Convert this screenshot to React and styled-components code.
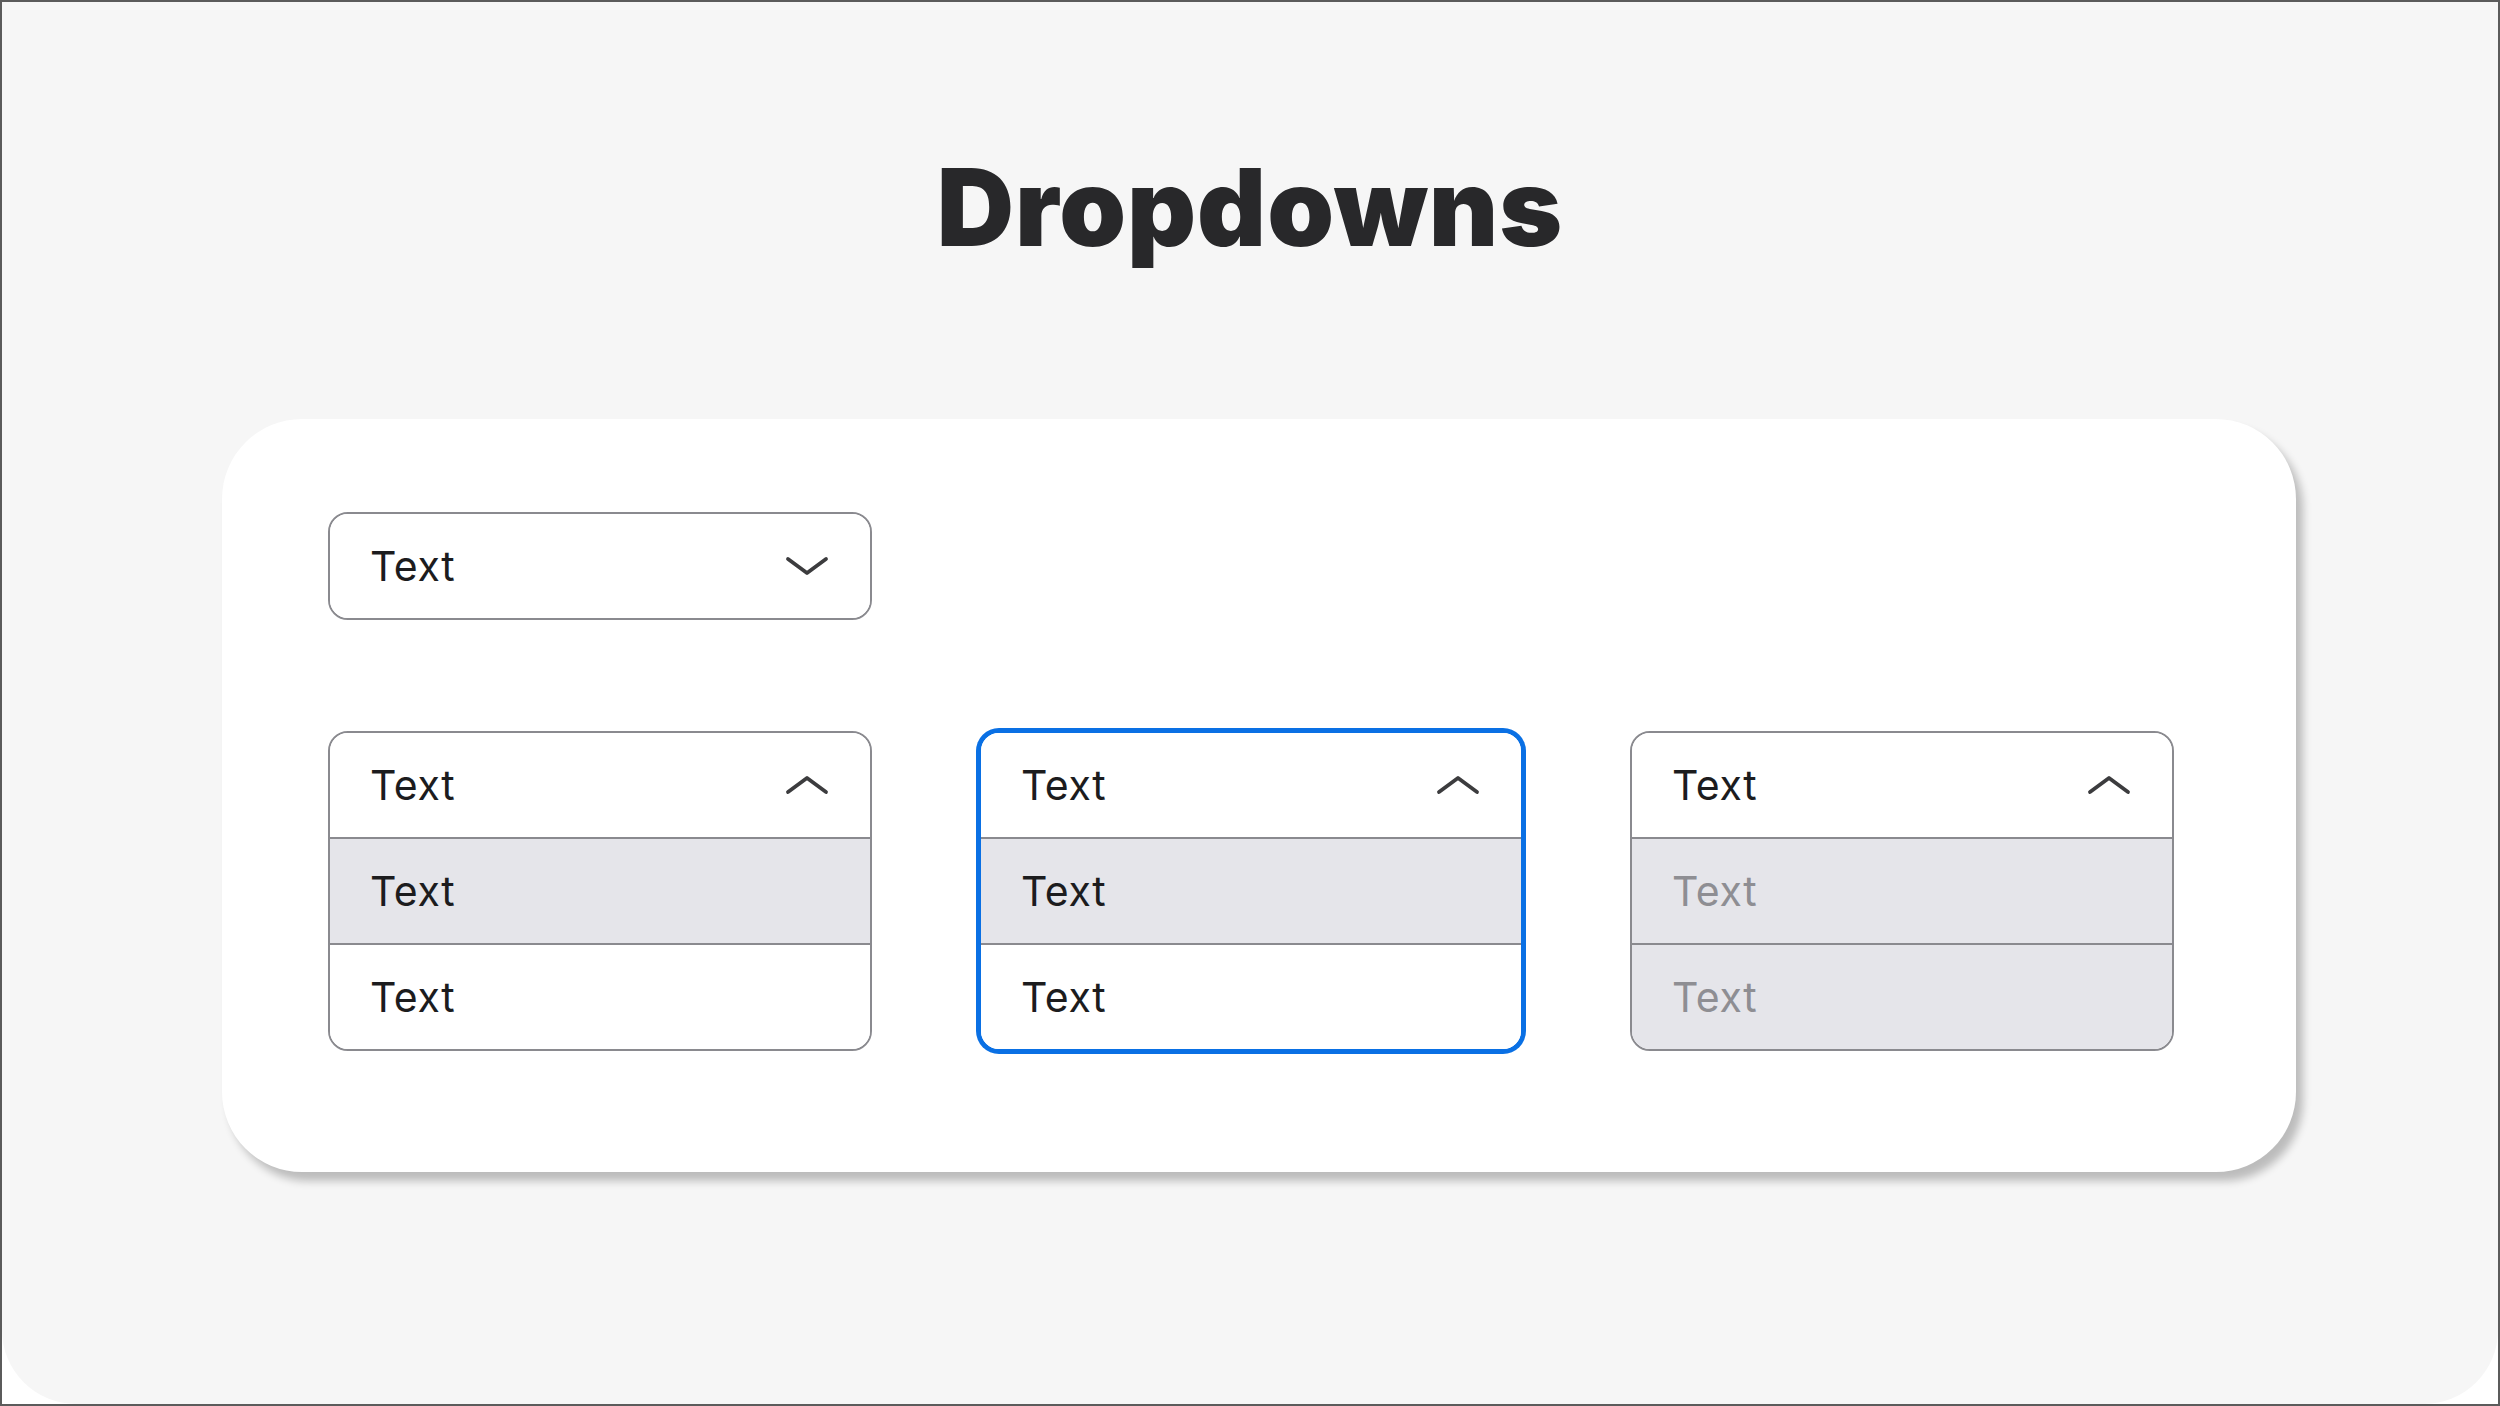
import React from "react";
import styled, { createGlobalStyle, css } from "styled-components";

const Global = createGlobalStyle`
  html, body {
    margin: 0;
    padding: 0;
    background: #ffffff;
  }
  * {
    box-sizing: border-box;
  }
`;

const Frame = styled.div`
  width: 2500px;
  height: 1406px;
  border: 2px solid #5b5b5b;
  background: #ffffff;
  font-family: Inter, "Noto Sans", sans-serif;
`;

const Panel = styled.main`
  height: 100%;
  background: #f6f6f6;
  border-radius: 0 0 74px 74px;
  padding-top: 152px;
  display: flex;
  flex-direction: column;
`;

const Title = styled.h1`
  margin: 0;
  text-align: center;
  font-family: Inter, sans-serif;
  font-weight: 900;
  font-size: 107px;
  line-height: 1;
  letter-spacing: 1px;
  color: #28282a;
`;

const Card = styled.section`
  margin: 158px 0 0 220px;
  width: 2074px;
  background: #ffffff;
  border-radius: 80px;
  box-shadow: 7px 9px 8px rgba(0, 0, 0, 0.24);
  padding: 93px 0 121px 106px;
  display: flex;
  flex-direction: column;
  gap: 111px;
`;

const Columns = styled.div`
  display: grid;
  grid-template-columns: repeat(3, 544px);
  column-gap: 107px;
  align-items: start;
`;

const Select = styled.div`
  width: 544px;
  border: 2px solid #8a8a8f;
  border-radius: 20px;
  background: #ffffff;
  overflow: hidden;
  ${(p) =>
    p.$focused &&
    css`
      border-color: #0a70e4;
      box-shadow: 0 0 0 3px #0a70e4;
    `}
`;

const Row = styled.div`
  height: 104px;
  display: flex;
  align-items: center;
  justify-content: space-between;
  padding: 0 41px 0 40px;
  font-size: 41px;
  letter-spacing: 0.6px;
  font-weight: 400;
  color: ${(p) => (p.$muted ? "#8e8e93" : "#1c1c1e")};
  background: ${(p) => (p.$shaded ? "#e5e5ea" : "#ffffff")};
  & + & {
    height: 106px;
    border-top: 2px solid #8a8a8f;
  }
`;

const Chevron = ({ up }) => (
  <svg width="44" height="20" viewBox="0 0 44 20" fill="none">
    <path
      d={up ? "M3 17 L22 3 L41 17" : "M3 3 L22 17 L41 3"}
      stroke="#3c3c3e"
      strokeWidth="3.8"
      strokeLinecap="round"
      strokeLinejoin="round"
    />
  </svg>
);

const Dropdown = ({ open, focused, options = [] }) => (
  <Select $focused={focused}>
    <Row>
      <span>Text</span>
      <Chevron up={open} />
    </Row>
    {open &&
      options.map((o, i) => (
        <Row key={i} $shaded={o.shaded} $muted={o.muted}>
          <span>Text</span>
        </Row>
      ))}
  </Select>
);

const normal = [{ shaded: true }, {}];
const disabled = [
  { shaded: true, muted: true },
  { shaded: true, muted: true },
];

export default function App() {
  return (
    <>
      <Global />
      <Frame>
        <Panel>
          <Title>Dropdowns</Title>
          <Card>
            <Dropdown />
            <Columns>
              <Dropdown open options={normal} />
              <Dropdown open focused options={normal} />
              <Dropdown open options={disabled} />
            </Columns>
          </Card>
        </Panel>
      </Frame>
    </>
  );
}
